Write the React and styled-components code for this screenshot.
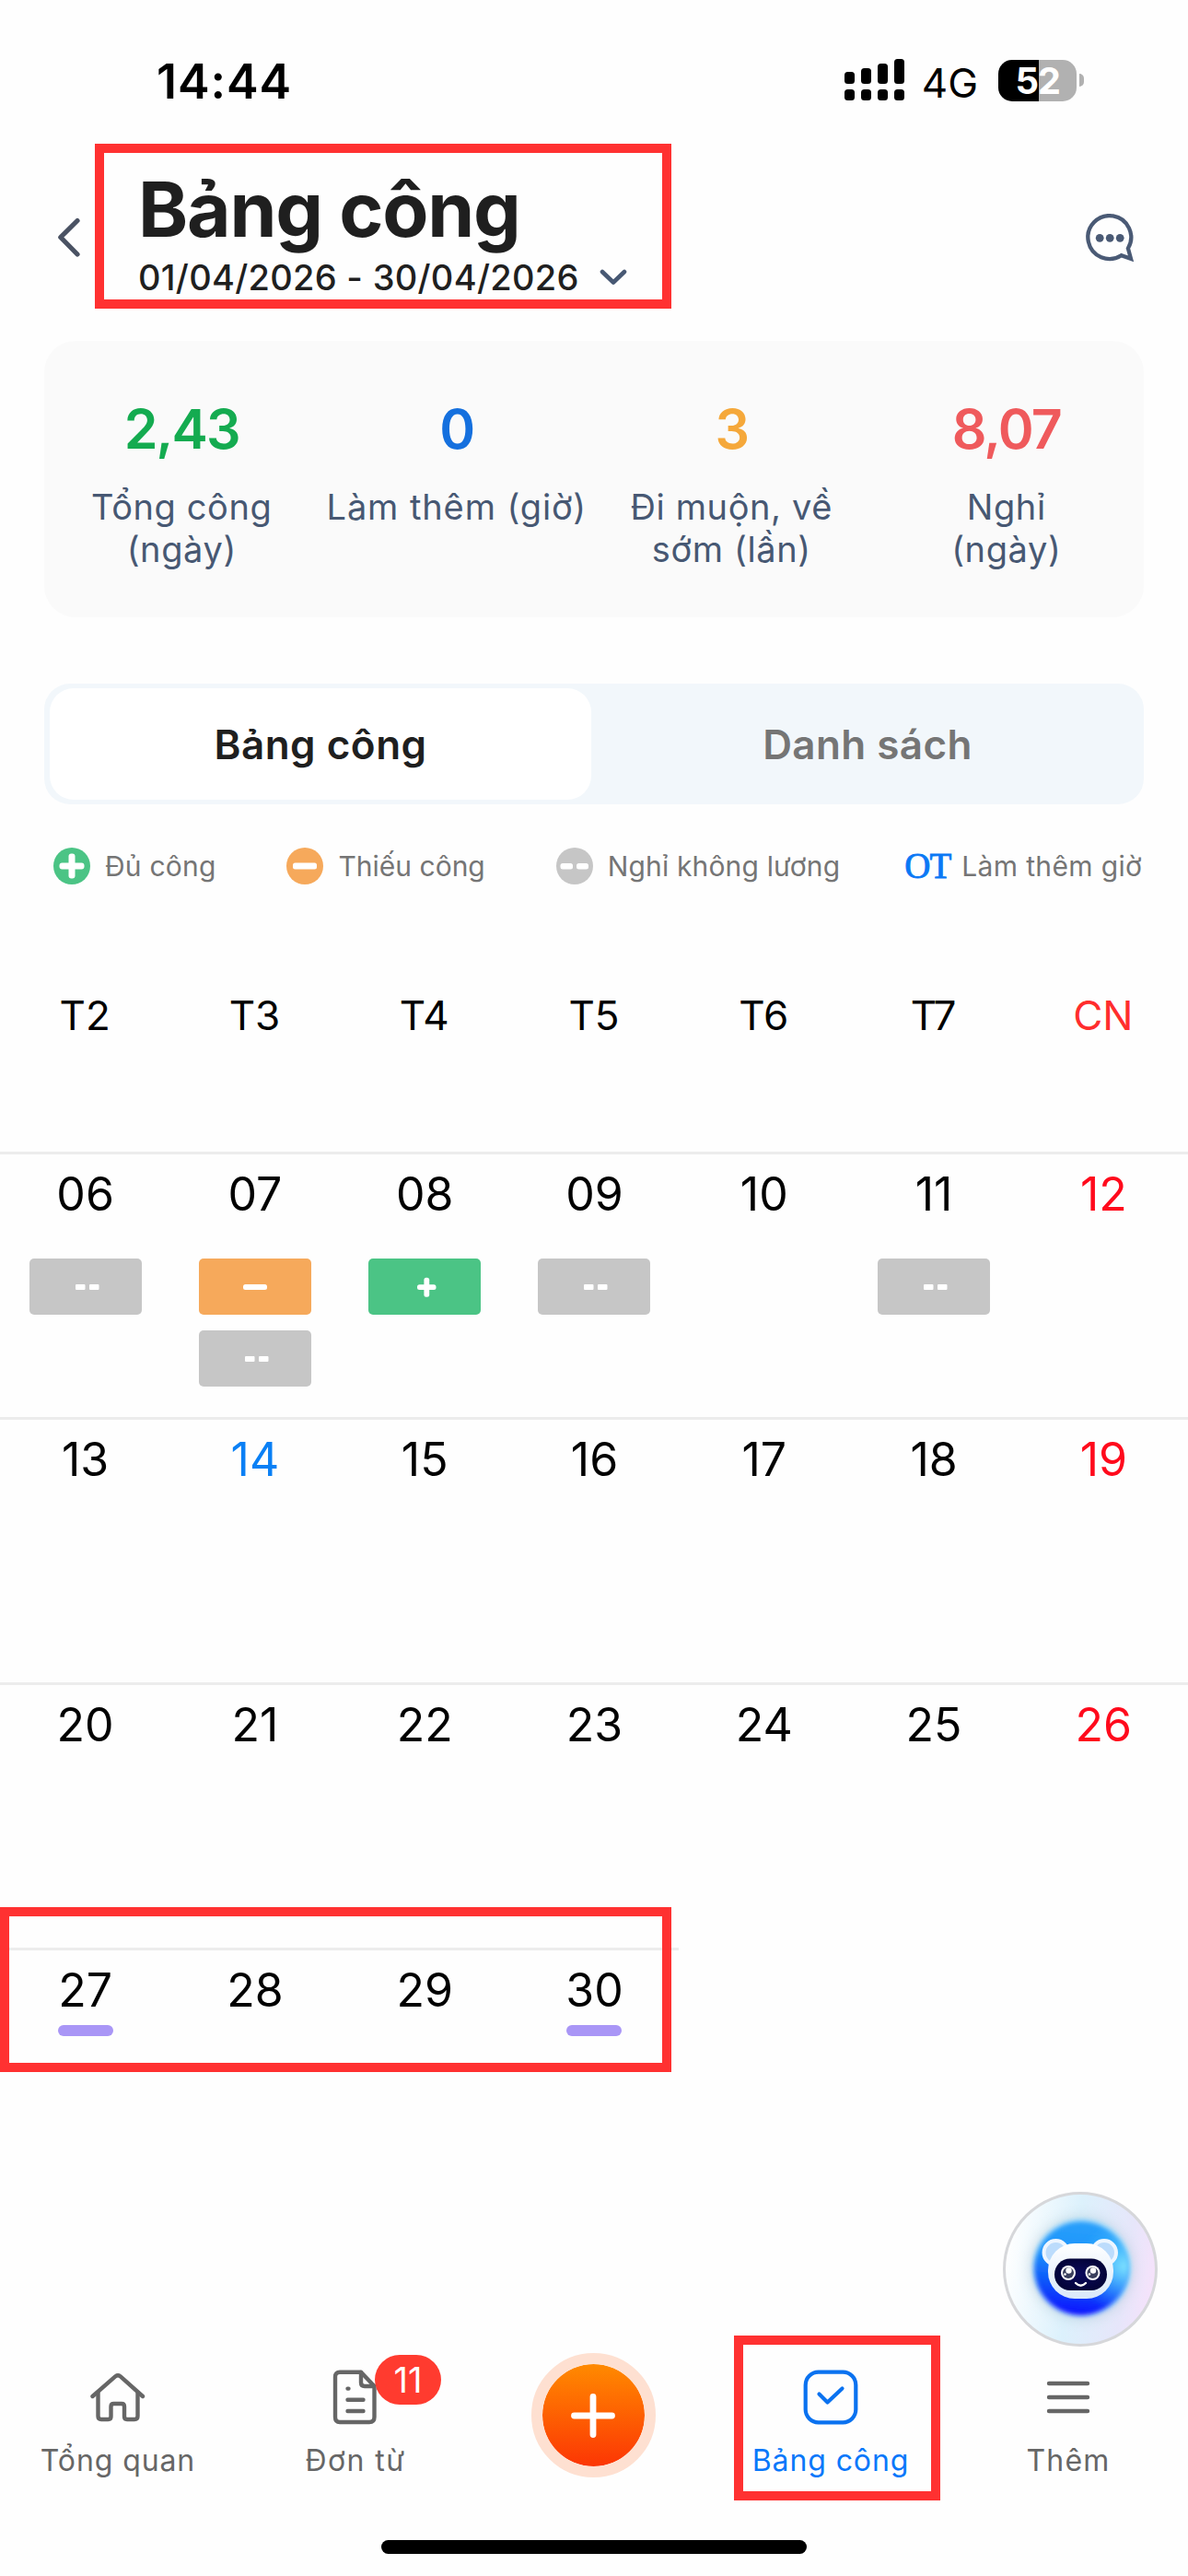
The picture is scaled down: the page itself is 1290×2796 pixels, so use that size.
import React from 'react';
import styled, { createGlobalStyle } from 'styled-components';

const GlobalStyle = createGlobalStyle`
  * {
    box-sizing: border-box;
  }
  body {
    margin: 0;
    background: #fefefe;
    font-family: Inter, Roboto, sans-serif;
  }
  svg {
    display: block;
    flex: none;
  }
`;

const stats = [
  { value: '2,43', label: ['Tổng công', '(ngày)'], color: '#14ab50' },
  { value: '0', label: ['Làm thêm (giờ)'], color: '#1570de', spacing: '0.9px' },
  { value: '3', label: ['Đi muộn, về', 'sớm (lần)'], color: '#f5a83a' },
  { value: '8,07', label: ['Nghỉ', '(ngày)'], color: '#ef5a5c' },
];

const weekdays = ['T2', 'T3', 'T4', 'T5', 'T6', 'T7', 'CN'];

const weeks = [
  [
    { day: '06', marks: ['off'] },
    { day: '07', marks: ['short', 'off'] },
    { day: '08', marks: ['full'] },
    { day: '09', marks: ['off'] },
    { day: '10' },
    { day: '11', marks: ['off'] },
    { day: '12', color: '#ff0a1c' },
  ],
  [
    { day: '13' },
    { day: '14', color: '#0a80f5' },
    { day: '15' },
    { day: '16' },
    { day: '17' },
    { day: '18' },
    { day: '19', color: '#ff0a1c' },
  ],
  [
    { day: '20' },
    { day: '21' },
    { day: '22' },
    { day: '23' },
    { day: '24' },
    { day: '25' },
    { day: '26', color: '#ff0a1c' },
  ],
  [
    { day: '27', event: true },
    { day: '28' },
    { day: '29' },
    { day: '30', event: true },
  ],
];

const markColors = {
  off: '#c6c6c6',
  short: '#f6a95b',
  full: '#4bc485',
};

const SignalIcon = () => (
  <svg width="66" height="46" viewBox="0 0 66 46">
    {[14, 10, 5, 0].map((top, i) => (
      <g key={top}>
        <rect x={i * 18} y={top} width="11" height={27 - top} rx="3.5" />
        <rect x={i * 18} y="33" width="11" height="12" rx="3.5" />
      </g>
    ))}
  </svg>
);

const BackIcon = () => (
  <svg width="26" height="44" viewBox="0 0 26 44" fill="none" stroke="#4a5263" strokeWidth="5.2" strokeLinecap="round" strokeLinejoin="round">
    <path d="M22 3.5 L3.8 21.5 L22 40" />
  </svg>
);

const DownIcon = () => (
  <svg width="30" height="18" viewBox="0 0 30 18" fill="none" stroke="#475873" strokeWidth="4.6" strokeLinecap="round" strokeLinejoin="round">
    <path d="M3 3 L15 14.5 L27 3" />
  </svg>
);

const ChatIcon = () => (
  <svg width="54" height="54" viewBox="0 0 54 54">
    <path
      d="M45.9 37.5 A23.4 23.4 0 1 0 38.5 45.2 L49 48.8 Z"
      fill="none"
      stroke="#4a5a75"
      strokeWidth="4.3"
    />
    <circle cx="15.2" cy="26.3" r="4.4" fill="#4a5a75" />
    <circle cx="26.2" cy="26.3" r="4.4" fill="#4a5a75" />
    <circle cx="37.2" cy="26.3" r="4.4" fill="#4a5a75" />
  </svg>
);

const LegendIcon = ({ kind }) => (
  <svg width="40" height="40" viewBox="0 0 40 40">
    <circle cx="20" cy="20" r="20" fill={markColors[kind]} />
    <g fill="#fff">
      {kind === 'full' && (
        <>
          <rect x="6.5" y="16.5" width="27" height="7" rx="3" />
          <rect x="16.5" y="6.5" width="7" height="27" rx="3" />
        </>
      )}
      {kind === 'short' && <rect x="7" y="16.5" width="26" height="7" rx="2.5" />}
      {kind === 'off' && (
        <>
          <rect x="4.5" y="17" width="13.5" height="6.5" rx="2.5" />
          <rect x="22" y="17" width="13" height="6.5" rx="2.5" />
        </>
      )}
    </g>
  </svg>
);

const MarkIcon = ({ kind }) => (
  <svg width="30" height="24" viewBox="0 0 30 24" fill="#fff">
    {kind === 'off' && (
      <>
        <rect x="4" y="9" width="10.5" height="6" rx="1" />
        <rect x="19" y="9" width="10.5" height="6" rx="1" />
      </>
    )}
    {kind === 'short' && <rect x="2" y="9" width="26" height="6" rx="2.5" />}
    {kind === 'full' && (
      <>
        <rect x="7" y="9.3" width="20.5" height="5.6" rx="2.5" />
        <rect x="14.4" y="1.7" width="5.8" height="21" rx="2.5" />
      </>
    )}
  </svg>
);

const HomeIcon = () => (
  <svg width="60" height="60" viewBox="0 0 60 60" fill="none" stroke="#666" strokeWidth="4.4" strokeLinecap="round" strokeLinejoin="round">
    <path d="M2.5 29 L27.5 7.2 Q30 5.3 32.5 7.2 L57 29" />
    <path d="M8.5 25 V50.5 Q8.5 54 12 54 H19.5 Q22.5 54 22.5 51 V40 Q22.5 37 25.5 37 H34 Q37 37 37 40 V51 Q37 54 40 54 H48 Q51.5 54 51.5 50.5 V25" />
  </svg>
);

const DocIcon = () => (
  <svg width="60" height="60" viewBox="0 0 60 60" fill="none" stroke="#666" strokeWidth="4.4" strokeLinecap="round" strokeLinejoin="round">
    <path d="M36 2.7 H13 Q8 2.7 8 7.7 V51.5 Q8 57 13 57 H45 Q50.5 57 50.5 51.5 V18 Z" />
    <path d="M36 3 V14 Q36 18 40 18 H50" />
    <path d="M21.5 20.6 H22.5 M21.5 32.8 H38.5 M21.5 45 H38.5" />
  </svg>
);

const CheckIcon = () => (
  <svg width="60" height="60" viewBox="0 0 60 60" fill="none" stroke="#0a72f0" strokeWidth="4.2" strokeLinecap="round" strokeLinejoin="round">
    <rect x="2.7" y="2.7" width="54.6" height="54.6" rx="14" />
    <path d="M17.5 26.5 L26.5 35.5 L42.5 20.5" />
  </svg>
);

const MenuIcon = () => (
  <svg width="60" height="60" viewBox="0 0 60 60" fill="none" stroke="#666" strokeWidth="4.4" strokeLinecap="round">
    <path d="M9 15 H51 M9 30 H51 M9 45 H51" />
  </svg>
);

const BotIcon = () => (
  <svg width="168" height="168" viewBox="0 0 168 168">
    <defs>
      <linearGradient id="halo" x1="0" y1="0.4" x2="1" y2="0.55">
        <stop offset="0" stopColor="#fff" />
        <stop offset="0.45" stopColor="#dcf1fc" />
        <stop offset="0.8" stopColor="#e6e6fa" />
        <stop offset="1" stopColor="#f6e2fb" />
      </linearGradient>
      <linearGradient id="orb" x1="0.55" y1="0" x2="0.45" y2="1">
        <stop offset="0" stopColor="#2aa0fb" />
        <stop offset="0.35" stopColor="#1c94fb" />
        <stop offset="0.7" stopColor="#0c50fa" />
        <stop offset="1" stopColor="#1010ff" />
      </linearGradient>
      <radialGradient id="glow" cx="0.95" cy="0.48" r="0.5">
        <stop offset="0" stopColor="#7fe2ff" />
        <stop offset="1" stopColor="#35b6fd" stopOpacity="0" />
      </radialGradient>
      <linearGradient id="head" x1="0" y1="0" x2="0" y2="1">
        <stop offset="0" stopColor="#fff" />
        <stop offset="1" stopColor="#d9e8fa" />
      </linearGradient>
      <radialGradient id="visor">
        <stop offset="0" stopColor="#0a0a5c" />
        <stop offset="1" stopColor="#04043a" />
      </radialGradient>
      <filter id="soft" x="-20%" y="-20%" width="140%" height="140%">
        <feGaussianBlur stdDeviation="2.5" />
      </filter>
      <filter id="shade" x="-30%" y="-30%" width="160%" height="160%">
        <feGaussianBlur stdDeviation="7" />
      </filter>
    </defs>
    <circle cx="84" cy="84" r="82.5" fill="url(#halo)" stroke="#d6d7da" strokeWidth="3" />
    <circle cx="85" cy="83" r="56" fill="#a5bccb" opacity="0.45" filter="url(#shade)" />
    <circle cx="86" cy="82.5" r="53.5" fill="#b5e2fb" filter="url(#soft)" />
    <circle cx="85" cy="83" r="51" fill="url(#orb)" filter="url(#soft)" />
    <circle cx="86" cy="83" r="51" fill="url(#glow)" filter="url(#soft)" />
    <circle cx="57.5" cy="66" r="13" fill="#bcdcfc" stroke="#eef6ff" strokeWidth="4" />
    <circle cx="110" cy="66" r="13" fill="#bcdcfc" stroke="#eef6ff" strokeWidth="4" />
    <rect x="49" y="56" width="71" height="60" rx="29" fill="url(#head)" />
    <rect x="56" y="72.5" width="57" height="34.5" rx="17" fill="url(#visor)" />
    {[71, 97.5].map((x) => (
      <g key={x}>
        <circle cx={x} cy="88" r="8" fill="#fff" />
        <circle cx={x} cy="88" r="6" fill="#3a3f5c" />
        <circle cx={x + 0.5} cy="85.5" r="3.2" fill="#fff" />
        <circle cx={x - 3.5} cy="89.5" r="1.3" fill="#fff" />
      </g>
    ))}
    <path d="M79 99 Q84.5 104.5 90 99" fill="none" stroke="#fff" strokeWidth="2.4" strokeLinecap="round" />
  </svg>
);

export default function App() {
  return (
    <Page>
      <GlobalStyle />
      <StatusBar>
        <Clock>14:44</Clock>
        <StatusIcons>
          <SignalIcon />
          <Network>4G</Network>
          <Battery>
            <BatteryBody>52</BatteryBody>
            <BatteryCap />
          </Battery>
        </StatusIcons>
      </StatusBar>

      <Header>
        <BackIcon />
        <TitleBlock>
          <Title>Bảng công</Title>
          <Period>
            01/04/2026 - 30/04/2026
            <DownIcon />
          </Period>
        </TitleBlock>
        <ChatIcon />
      </Header>

      <Stats>
        {stats.map((s) => (
          <Stat key={s.value}>
            <StatValue $color={s.color}>{s.value}</StatValue>
            {s.label.map((line) => (
              <StatLabel key={line} $spacing={s.spacing}>{line}</StatLabel>
            ))}
          </Stat>
        ))}
      </Stats>

      <Tabs>
        <Tab $active>Bảng công</Tab>
        <Tab>Danh sách</Tab>
      </Tabs>

      <Legend>
        <LegendItem $spacing="0.2px"><LegendIcon kind="full" />Đủ công</LegendItem>
        <LegendItem><LegendIcon kind="short" />Thiếu công</LegendItem>
        <LegendItem $spacing="0.15px"><LegendIcon kind="off" />Nghỉ không lương</LegendItem>
        <LegendItem $gap="12px" $spacing="0.35px"><Overtime>OT</Overtime>Làm thêm giờ</LegendItem>
      </Legend>

      <Weekdays>
        {weekdays.map((d) => (
          <Weekday key={d} $sunday={d === 'CN'}>{d}</Weekday>
        ))}
      </Weekdays>

      {weeks.map((week) => (
        <Week key={week[0].day}>
          {week.map((cell) => (
            <Cell key={cell.day}>
              <DayNumber $color={cell.color}>{cell.day}</DayNumber>
              {cell.event && <EventBar />}
              {cell.marks && (
                <Marks>
                  {cell.marks.map((m) => (
                    <Mark key={m} $kind={m}><MarkIcon kind={m} /></Mark>
                  ))}
                </Marks>
              )}
            </Cell>
          ))}
          {week.length < 7 && <Highlight $x={0} $y={-44} $w={729} />}
        </Week>
      ))}

      <BottomNav>
        <NavItem><HomeIcon /><NavLabel>Tổng quan</NavLabel></NavItem>
        <NavItem>
          <DocIcon />
          <Badge>11</Badge>
          <NavLabel $spacing="1.4px">Đơn từ</NavLabel>
        </NavItem>
        <NavItem>
          <AddButton>
            <svg width="50" height="50" viewBox="0 0 50 50" stroke="#fff" strokeWidth="6.8" strokeLinecap="round">
              <path d="M4.5 25 H45.5 M25 4.5 V45.5" />
            </svg>
          </AddButton>
        </NavItem>
        <NavItem>
          <CheckIcon />
          <NavLabel $active>Bảng công</NavLabel>
          <Highlight $x={23} $y={0} $w={224} />
        </NavItem>
        <NavItem><MenuIcon /><NavLabel $spacing="1.2px">Thêm</NavLabel></NavItem>
      </BottomNav>
      <HomeIndicator />

      <Assistant><BotIcon /></Assistant>
    </Page>
  );
}

const Page = styled.div`
  position: relative;
  display: flex;
  flex-direction: column;
  width: 1290px;
  height: 2796px;
  overflow: hidden;
  background: #fefefe;
`;

const StatusBar = styled.div`
  display: flex;
  justify-content: space-between;
  height: 156px;
  padding: 57px 113px 0 170px;
`;

const Clock = styled.div`
  font-size: 52px;
  line-height: 63px;
  font-weight: 600;
  letter-spacing: 0.9px;
  color: #000;
`;

const StatusIcons = styled.div`
  display: flex;
  align-items: center;
  height: 60px;
`;

const Network = styled.div`
  margin: 5px 22px 0 18px;
  font-size: 44px;
  line-height: 50px;
`;

const Battery = styled.div`
  display: flex;
  align-items: center;
  gap: 3px;
`;

const BatteryBody = styled.div`
  width: 85px;
  height: 45px;
  border-radius: 15px;
  background: linear-gradient(90deg, #000 52%, #b1b1b1 52%);
  color: #fff;
  font-size: 40px;
  line-height: 45px;
  font-weight: 700;
  letter-spacing: -1.5px;
  text-align: center;
`;

const BatteryCap = styled.div`
  width: 5px;
  height: 14px;
  border-radius: 0 5px 5px 0;
  background: #b1b1b1;
`;

const Header = styled.header`
  display: flex;
  align-items: flex-start;
  height: 214px;
  padding: 0 57px 0 62px;
  > svg:first-child {
    margin-top: 80px;
  }
  > svg:last-child {
    margin-top: 76px;
    margin-left: auto;
  }
`;

const TitleBlock = styled.div`
  width: 626px;
  height: 179px;
  margin-left: 15px;
  padding: 12px 0 0 37px;
  border: 10px solid #ff3131;
`;

const Title = styled.h1`
  margin: 0 0 -1px;
  font-size: 82px;
  line-height: 100px;
  font-weight: 700;
  letter-spacing: -1.2px;
  color: #1f1f1f;
`;

const Period = styled.div`
  display: flex;
  align-items: center;
  gap: 22px;
  font-size: 38px;
  line-height: 48px;
  font-weight: 500;
  letter-spacing: 0.28px;
  white-space: nowrap;
  color: #1f1f1f;
`;

const Stats = styled.section`
  display: grid;
  grid-template-columns: repeat(4, 1fr);
  height: 300px;
  margin: 0 48px;
  padding-top: 60px;
  border-radius: 34px;
  background: #fafafa;
`;

const Stat = styled.div`
  text-align: center;
`;

const StatValue = styled.div`
  height: 71px;
  margin-bottom: 26px;
  font-size: 59px;
  line-height: 72px;
  font-weight: 600;
  letter-spacing: -1.8px;
  color: ${(p) => p.$color};
`;

const StatLabel = styled.div`
  font-size: 38px;
  line-height: 46px;
  letter-spacing: ${(p) => p.$spacing || '0.6px'};
  white-space: nowrap;
  color: #475873;
`;

const Tabs = styled.div`
  display: flex;
  height: 131px;
  margin: 72px 48px 0;
  padding: 5px 6px;
  border-radius: 28px;
  background: #f2f7fb;
`;

const Tab = styled.div`
  flex: ${(p) => (p.$active ? '0 0 588px' : '1')};
  padding-left: ${(p) => (p.$active ? '0' : '6px')};
  border-radius: 26px;
  background: ${(p) => (p.$active ? '#fff' : 'transparent')};
  color: ${(p) => (p.$active ? '#1f1f1f' : '#757575')};
  font-size: 44px;
  line-height: 122px;
  font-weight: 600;
  letter-spacing: ${(p) => (p.$active ? '0.5px' : '0.4px')};
  text-align: center;
`;

const Legend = styled.div`
  display: flex;
  align-items: center;
  gap: 77px;
  height: 80px;
  margin-top: 27px;
  padding: 0 49px 0 58px;
`;

const LegendItem = styled.div`
  display: flex;
  align-items: center;
  gap: ${(p) => p.$gap || '16px'};
  font-size: 30px;
  line-height: 40px;
  letter-spacing: ${(p) => p.$spacing || '0'};
  white-space: nowrap;
  color: #757575;
  &:last-child {
    margin-left: -7px;
  }
`;

const Overtime = styled.span`
  font-family: 'Liberation Serif', serif;
  font-size: 39px;
  letter-spacing: -1px;
  color: #0a78f5;
  -webkit-text-stroke: 0.9px #0a78f5;
`;

const Weekdays = styled.div`
  display: grid;
  grid-template-columns: repeat(7, 1fr);
  height: 270px;
  padding-top: 92px;
`;

const Weekday = styled.div`
  font-size: 44px;
  line-height: 60px;
  text-align: center;
  color: ${(p) => (p.$sunday ? '#ff2d2d' : '#000')};
`;

const Week = styled.div`
  position: relative;
  display: grid;
  grid-template-columns: repeat(7, 1fr);
  height: 288px;
`;

const Cell = styled.div`
  display: flex;
  flex-direction: column;
  align-items: center;
  padding: 13px 0 0 1px;
  border-top: 3px solid #ececec;
`;

const DayNumber = styled.div`
  font-size: 50px;
  line-height: 60px;
  color: ${(p) => p.$color || '#000'};
`;

const EventBar = styled.div`
  width: 60px;
  height: 12px;
  margin-top: 8px;
  border-radius: 6px;
  background: #a996f6;
`;

const Marks = styled.div`
  display: flex;
  flex-direction: column;
  gap: 17px;
  margin-top: 40px;
`;

const Mark = styled.div`
  display: flex;
  align-items: center;
  justify-content: center;
  width: 122px;
  height: 61px;
  border-radius: 5px;
  background: ${(p) => markColors[p.$kind]};
`;

const Highlight = styled.div`
  position: absolute;
  left: ${(p) => p.$x}px;
  top: ${(p) => p.$y}px;
  width: ${(p) => p.$w}px;
  height: 179px;
  border: 10px solid #ff3131;
`;

const BottomNav = styled.nav`
  display: grid;
  grid-template-columns: repeat(5, 1fr);
  height: 222px;
  margin-top: auto;
`;

const NavItem = styled.div`
  position: relative;
  display: flex;
  flex-direction: column;
  align-items: center;
  padding: 37px 2px 0 0;
`;

const NavLabel = styled.div`
  margin-top: 15px;
  font-size: 32px;
  line-height: 48px;
  letter-spacing: ${(p) => p.$spacing || '0.9px'};
  white-space: nowrap;
  color: ${(p) => (p.$active ? '#0a78fa' : '#666')};
`;

const Badge = styled.div`
  position: absolute;
  left: 149px;
  top: 21px;
  width: 72px;
  height: 54px;
  border-radius: 27px;
  background: #ff3b2f;
  color: #fff;
  font-size: 38px;
  line-height: 54px;
  text-align: center;
`;

const AddButton = styled.div`
  display: flex;
  align-items: center;
  justify-content: center;
  width: 135px;
  height: 135px;
  margin-top: -18px;
  border: 12px solid #fee0d1;
  border-radius: 50%;
  background: linear-gradient(#ff8a00, #fc3604) padding-box;
`;

const HomeIndicator = styled.div`
  width: 462px;
  height: 15px;
  margin: 0 auto 24px;
  border-radius: 8px;
  background: #000;
`;

const Assistant = styled.div`
  position: absolute;
  left: 1089px;
  top: 2379px;
`;
